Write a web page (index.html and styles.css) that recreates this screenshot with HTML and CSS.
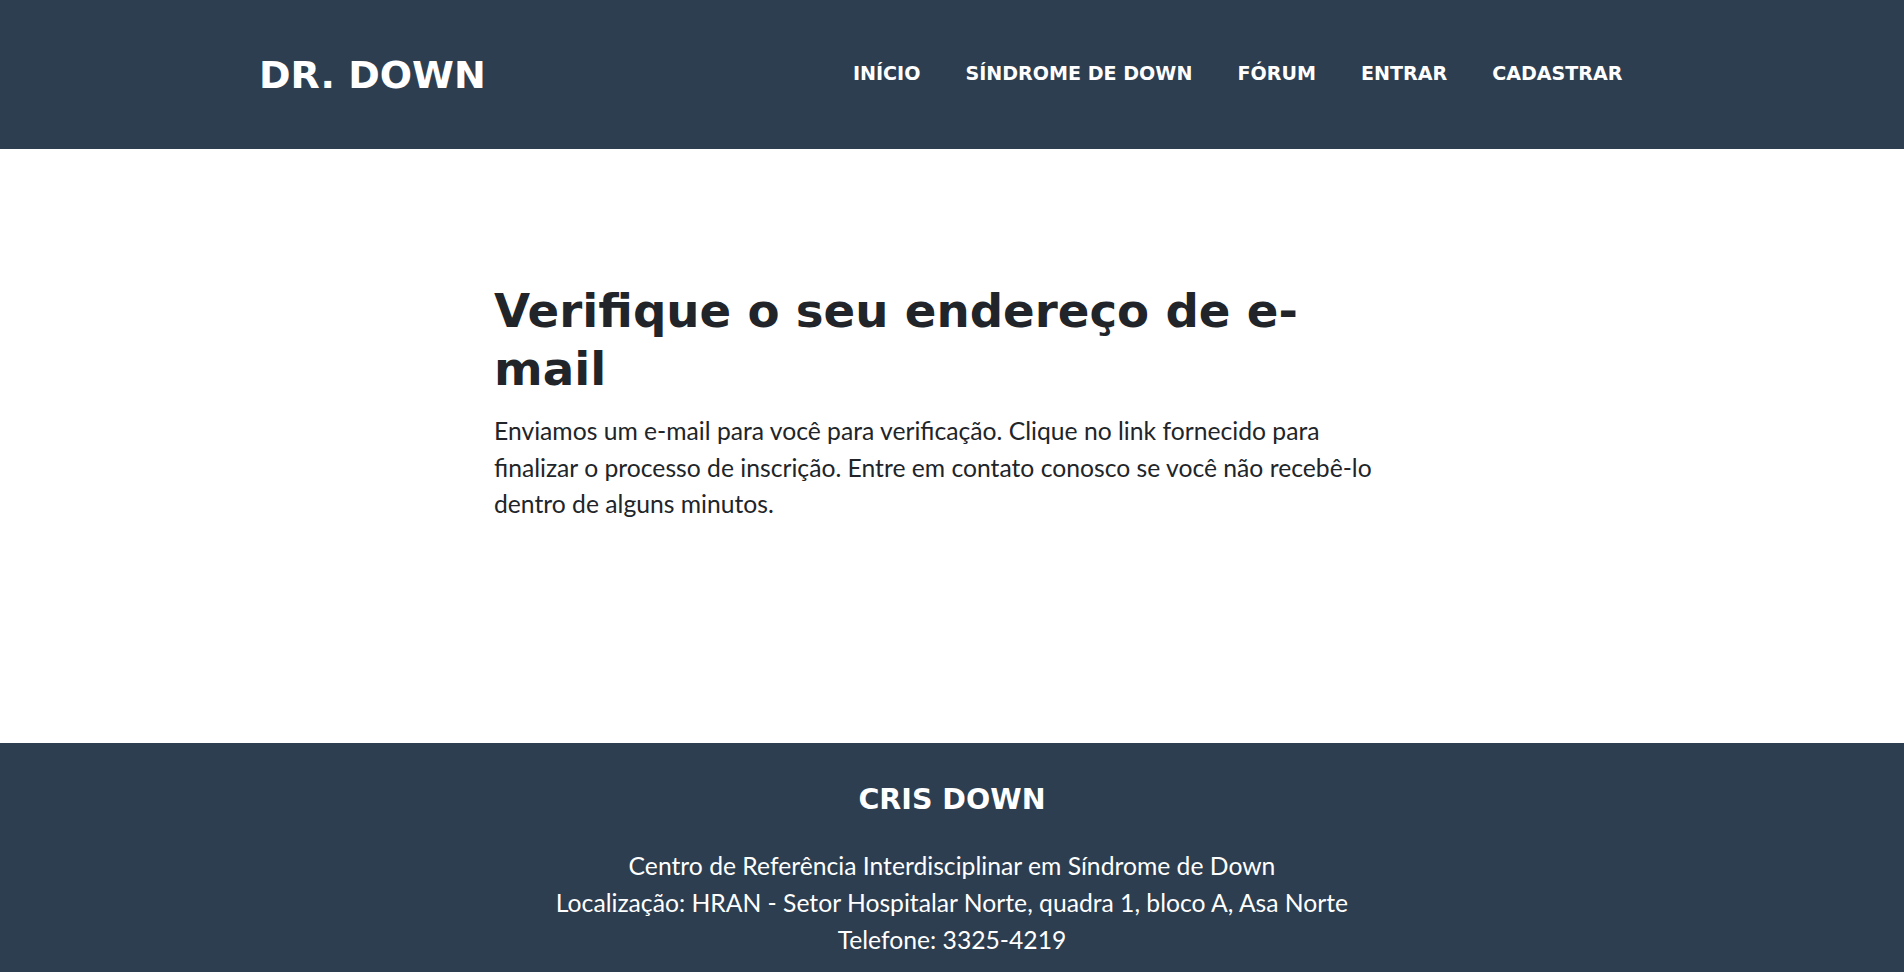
FILE: index.html
```html
<!DOCTYPE html>
<html lang="pt-BR">
<head>
<meta charset="utf-8">
<title>Dr. Down - Verifique o seu endereço de e-mail</title>
<link rel="stylesheet" href="styles.css">
</head>
<body>
<header class="site-header">
  <nav class="navbar">
    <a class="brand" href="#">DR. DOWN</a>
    <ul class="nav-links">
      <li><a href="#">INÍCIO</a></li>
      <li><a href="#">SÍNDROME DE DOWN</a></li>
      <li><a href="#">FÓRUM</a></li>
      <li><a href="#">ENTRAR</a></li>
      <li><a href="#">CADASTRAR</a></li>
    </ul>
  </nav>
</header>
<main class="main">
  <div class="content">
    <h1 class="title">Verifique o seu endereço de e-mail</h1>
    <p class="lead">Enviamos um e-mail para você para verificação. Clique no link fornecido para finalizar o processo de inscrição. Entre em contato conosco se você não recebê-lo dentro de alguns minutos.</p>
  </div>
</main>
<footer class="site-footer">
  <h3 class="footer-title">CRIS DOWN</h3>
  <p class="footer-text">Centro de Referência Interdisciplinar em Síndrome de Down<br>Localização: HRAN - Setor Hospitalar Norte, quadra 1, bloco A, Asa Norte<br>Telefone: 3325-4219</p>
</footer>
</body>
</html>
```

FILE: styles.css
```css
html, body {
  margin: 0;
  padding: 0;
}

body {
  font-family: Lato, "Noto Sans", sans-serif;
  color: #212529;
  background: #ffffff;
  overflow: hidden;
}

.site-header {
  background: #2c3e50;
  height: 149px;
  display: flex;
  align-items: center;
}

.navbar {
  width: 1386px;
  margin: 0 auto;
  display: flex;
  align-items: center;
  justify-content: space-between;
}

.brand {
  font-family: "DejaVu Sans", sans-serif;
  font-weight: 700;
  font-size: 38px;
  color: #ffffff;
  text-decoration: none;
  line-height: 1;
}

.nav-links {
  list-style: none;
  margin: 0;
  padding: 0;
  display: flex;
  align-items: center;
}

.nav-links a {
  display: block;
  padding: 8px 22.5px;
  font-family: "DejaVu Sans", sans-serif;
  font-weight: 700;
  font-size: 19.1px;
  color: #ffffff;
  text-decoration: none;
  line-height: 1.2;
}

.main {
  padding: 133px 0 220px;
}

.content {
  width: 890px;
  margin-left: calc(50% - 458px);
}

.title {
  font-family: "DejaVu Sans", sans-serif;
  font-weight: 700;
  font-size: 46.7px;
  line-height: 58px;
  color: #212529;
  margin: 0 0 15px;
}

.lead {
  font-size: 24.7px;
  line-height: 36.5px;
  margin: 0;
}

.site-footer {
  background: #2c3e50;
  color: #ffffff;
  text-align: center;
  padding: 39px 0 14px;
}

.footer-title {
  font-family: "DejaVu Sans", sans-serif;
  font-weight: 700;
  font-size: 28.5px;
  line-height: 35px;
  margin: 0 0 30px;
}

.footer-text {
  font-size: 24.7px;
  line-height: 37px;
  margin: 0;
}
```
